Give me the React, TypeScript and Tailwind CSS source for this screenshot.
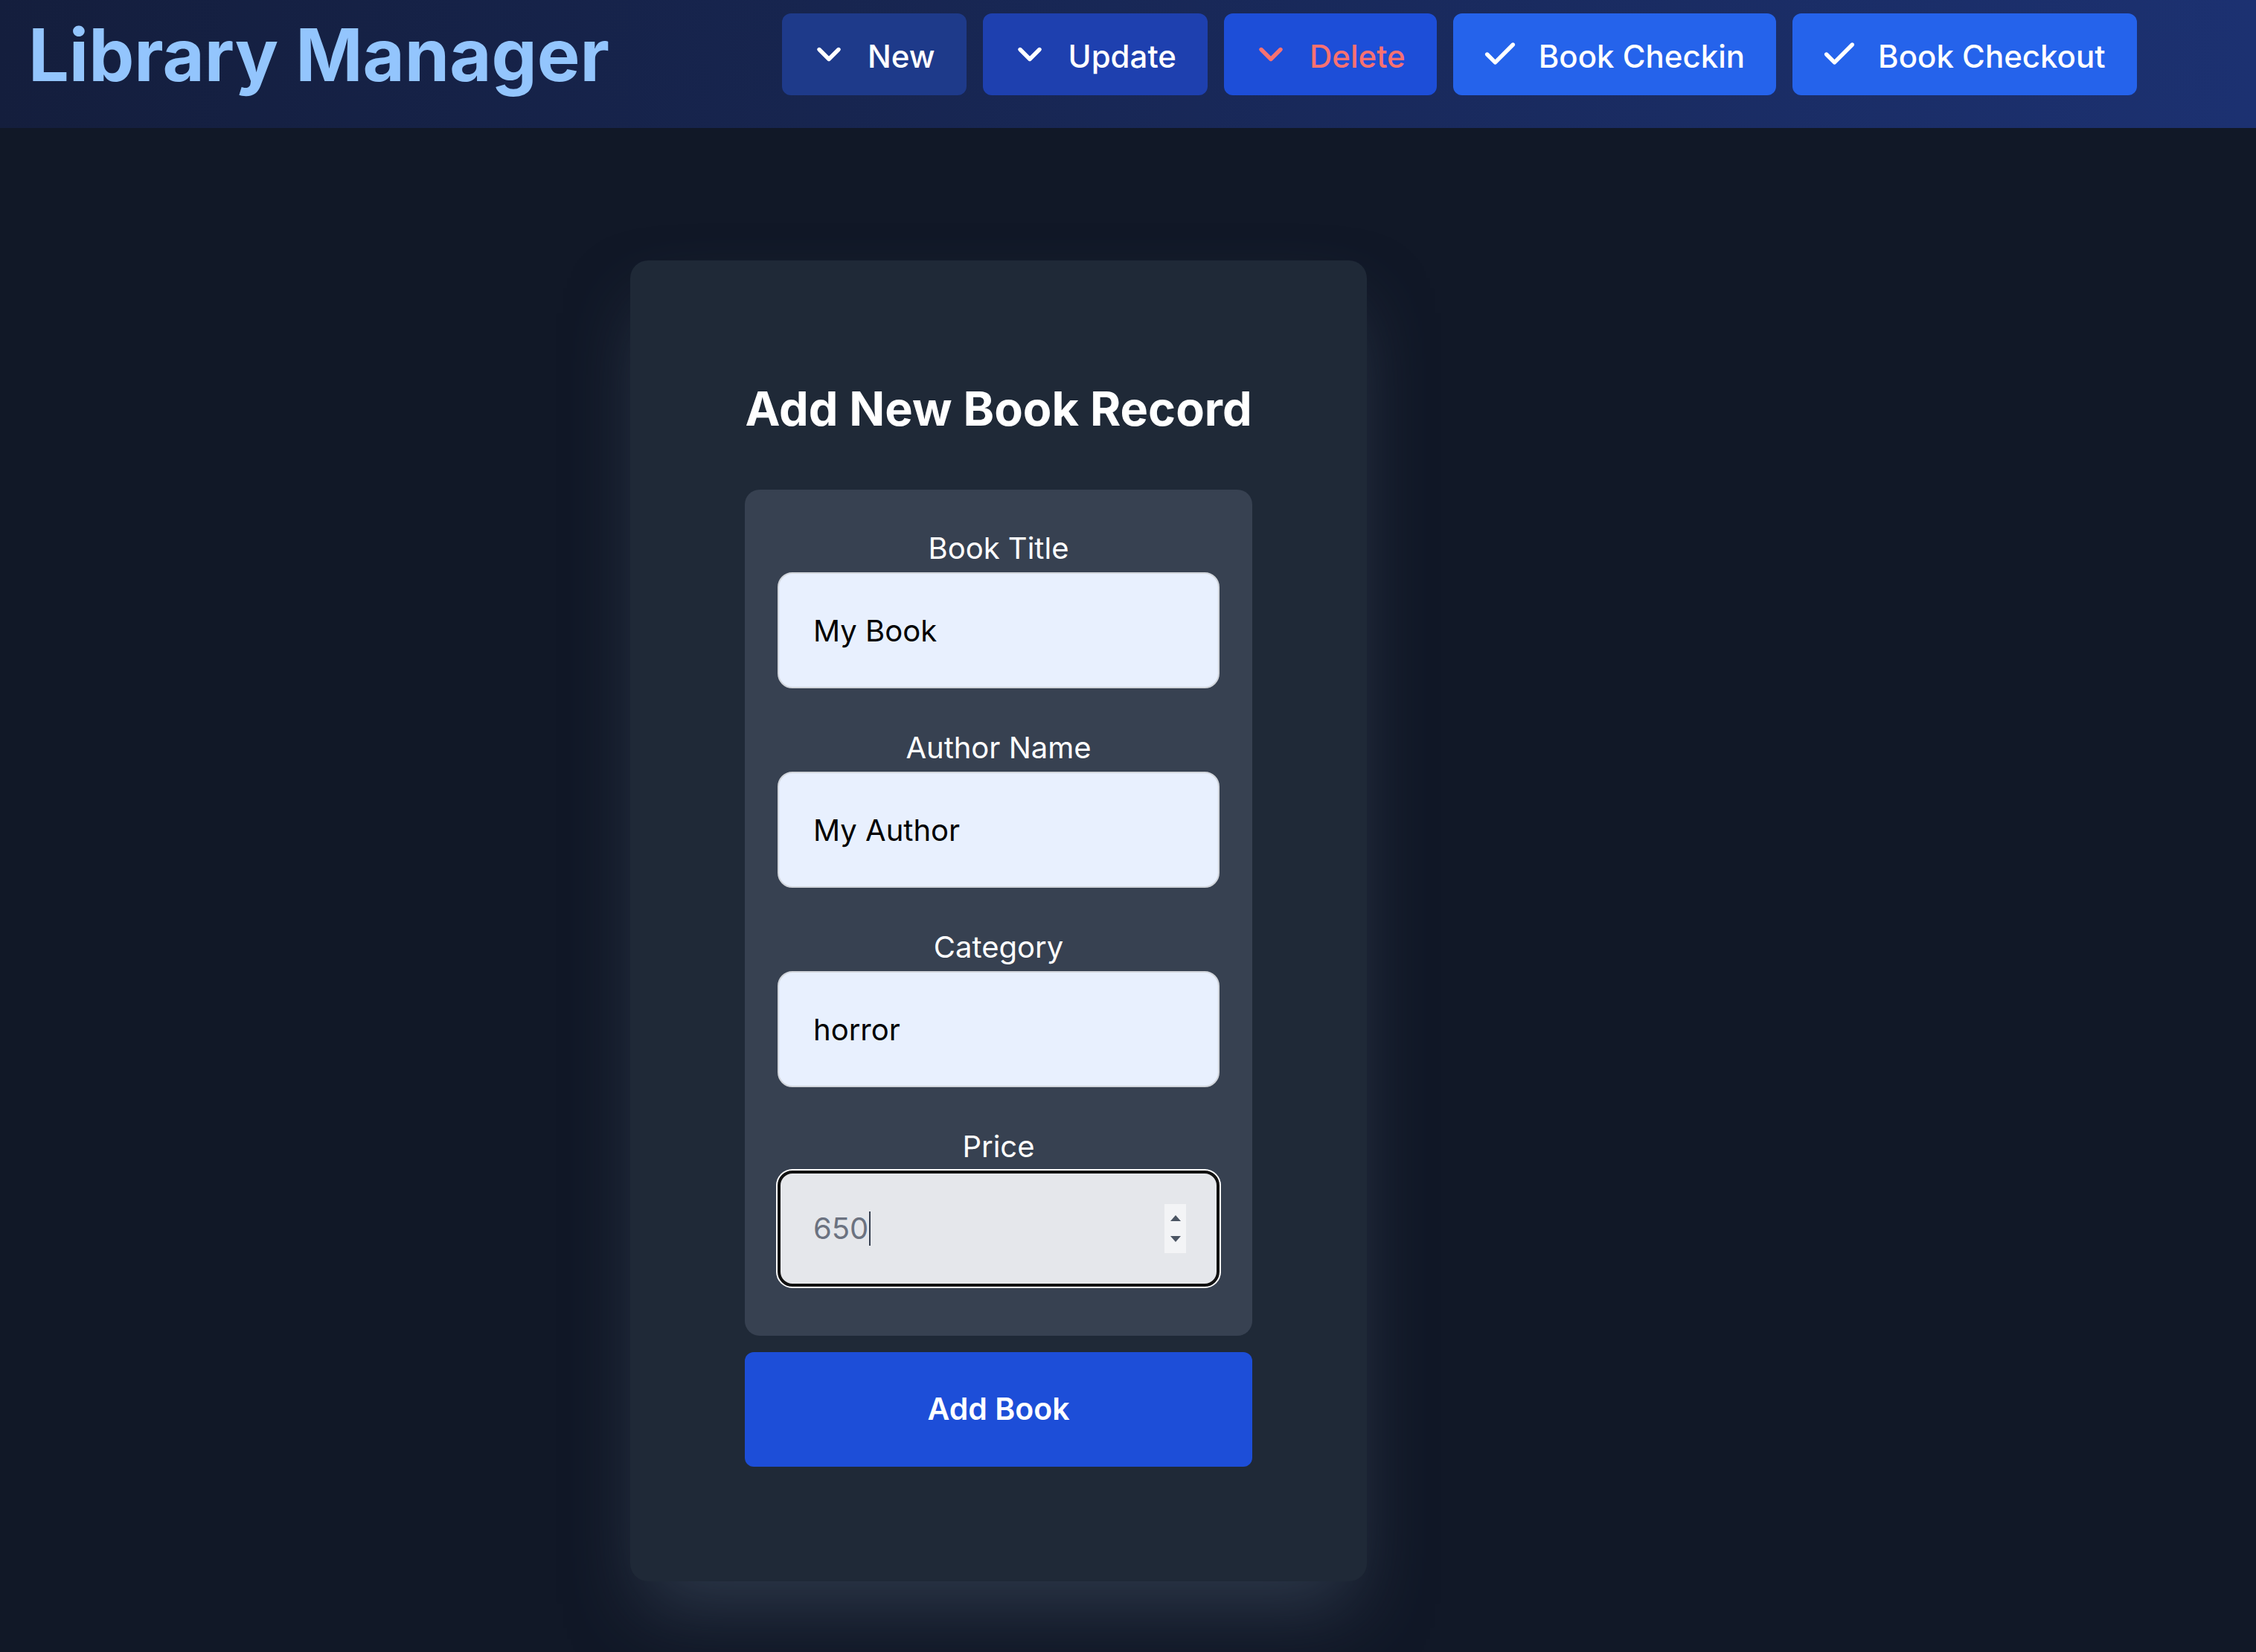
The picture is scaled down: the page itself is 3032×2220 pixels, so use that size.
import { Check, ChevronDown } from "lucide-react";

type NavButton = {
  label: string;
  icon: "chevron" | "check";
  className: string;
};

const navButtons: NavButton[] = [
  { label: "New", icon: "chevron", className: "bg-[#1e3a8a] text-white" },
  { label: "Update", icon: "chevron", className: "bg-[#1e40af] text-white" },
  { label: "Delete", icon: "chevron", className: "bg-[#1d4ed8] text-[#f87171]" },
  { label: "Book Checkin", icon: "check", className: "bg-[#2563eb] text-white" },
  { label: "Book Checkout", icon: "check", className: "bg-[#2563eb] text-white" },
];

const fields = [
  { label: "Book Title", value: "My Book" },
  { label: "Author Name", value: "My Author" },
  { label: "Category", value: "horror" },
];

function Header() {
  return (
    <header className="flex h-[172px] items-center bg-gradient-to-r from-[#141e3d] to-[#1c3171] pb-[26px] pl-[38px]">
      <div className="w-[1013px] shrink-0">
        <h1 className="text-[97px] font-bold leading-none text-[#93c5fd]">Library Manager</h1>
      </div>
      <nav className="flex gap-[22px]">
        {navButtons.map((button) => (
          <button
            key={button.label}
            type="button"
            className={`flex h-[110px] items-center gap-[26px] rounded-[12px] pl-[37px] pr-[42px] pt-[4px] text-[42px] font-medium ${button.className}`}
          >
            {button.icon === "chevron" ? (
              <ChevronDown size={52} strokeWidth={2.5} className="-mt-[4px]" />
            ) : (
              <Check size={52} strokeWidth={2.5} className="-mt-[4px]" />
            )}
            {button.label}
          </button>
        ))}
      </nav>
    </header>
  );
}

function PriceField() {
  return (
    <div className="flex h-[156px] w-full items-center rounded-[20px] border-[4px] border-[#111111] bg-[#e5e7eb] pl-[44px] pr-[41px] shadow-[0_0_0_2px_#ffffff]">
      <span className="text-[40px] text-[#6b7280]">650</span>
      <span className="ml-[1px] h-[46px] w-[2px] bg-[#374151]" />
      <div className="flex-1" />
      <div className="flex h-[66px] w-[29px] flex-col items-center justify-center gap-[20px] bg-[#f3f4f6]">
        <svg width="14" height="8" viewBox="0 0 14 8">
          <path d="M7 0 14 8H0Z" fill="#4b5563" />
        </svg>
        <svg width="14" height="8" viewBox="0 0 14 8">
          <path d="M0 0h14L7 8Z" fill="#4b5563" />
        </svg>
      </div>
    </div>
  );
}

export default function App() {
  return (
    <div className="min-h-[2220px] bg-[#111827] font-['Inter','Noto_Sans',sans-serif]">
      <Header />
      <main className="pt-[178px]">
        <div className="ml-[847px] w-[990px] rounded-[24px] bg-[#1f2937] p-[154px] shadow-[0_50px_100px_-20px_rgba(71,85,105,0.55)]">
          <h2 className="mb-[64px] text-center text-[63px] font-bold leading-[90px] text-white">
            Add New Book Record
          </h2>
          <form className="flex flex-col">
            <div className="rounded-[20px] bg-[#374151] px-[44px] pb-[66px] pt-[51px]">
              {fields.map((field) => (
                <div key={field.label} className="mb-[52px]">
                  <label className="mb-[4px] block text-center text-[40px] leading-[56px] text-white">
                    {field.label}
                  </label>
                  <input
                    type="text"
                    readOnly
                    value={field.value}
                    className="block h-[156px] w-full rounded-[20px] border-2 border-[#d1d5db] bg-[#e8f0fe] px-[46px] text-[40px] text-black outline-none"
                  />
                </div>
              ))}
              <div>
                <label className="mb-[4px] block text-center text-[40px] leading-[56px] text-white">Price</label>
                <PriceField />
              </div>
            </div>
            <button
              type="button"
              className="mt-[22px] h-[154px] w-full rounded-[12px] bg-[#1d4ed8] text-[41px] font-semibold text-white"
            >
              Add Book
            </button>
          </form>
        </div>
      </main>
    </div>
  );
}
